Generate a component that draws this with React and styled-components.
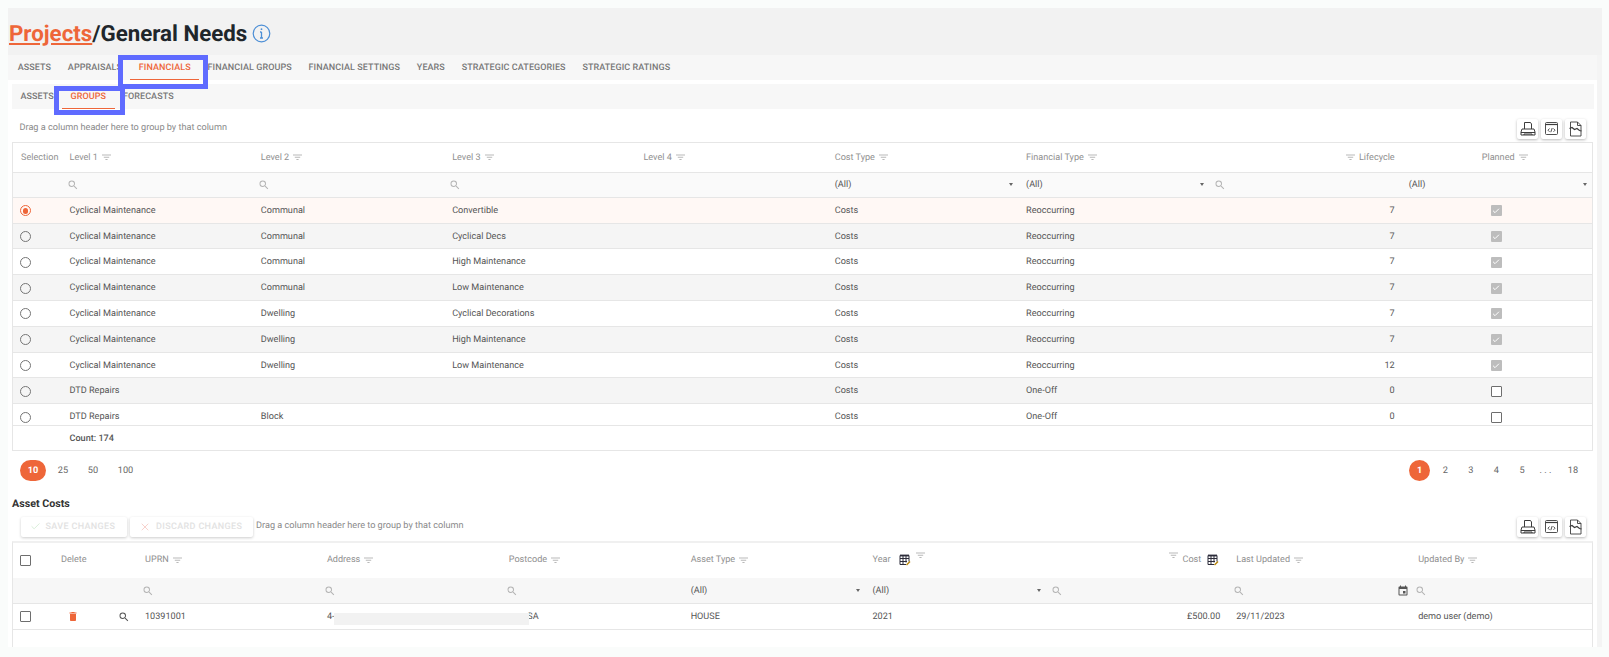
import styled, { createGlobalStyle } from "styled-components"
import { Check, X } from "lucide-react"
import { MdDelete, MdEvent, MdSearch } from "react-icons/md"

const orange = "#ee6639"

const GlobalStyle = createGlobalStyle`
    html, body {
        margin: 0;
        height: 100%;
        background: #fafcfb;
        overflow: hidden;
    }
    body {
        font-family: Roboto, "Liberation Sans", sans-serif;
        font-size: 9.1px;
        color: #555;
        text-rendering: geometricPrecision;
    }
`

const Frame = styled.div`
    position: relative;
    margin: 8px 7px 0 7.5px;
    height: 638.7px;
    overflow: hidden;
    background: #fff;
`

const TitleBand = styled.div`
    height: 47px;
    background: #f2f2f2;
    display: flex;
    align-items: center;
    gap: 5px;
    padding: 4px 0 0 1.5px;
    box-sizing: border-box;
`

const Title = styled.h1`
    margin: 0;
    font-size: 22.3px;
    font-weight: 700;
    color: #20262b;
`

const TitleLink = styled.a`
    color: ${orange};
    text-decoration: underline;
    text-underline-offset: 2px;
`

const Body = styled.div`
    display: flex;
    height: 591.7px;
`

const Main = styled.div`
    flex: 1;
    min-width: 0;
`

const Scrollbar = styled.div`
    width: 5px;
    background: #f4f4f4;
`

const TabBar = styled.div`
    display: flex;
    height: ${p => p.$h}px;
    background: #f7f7f7;
    padding-left: ${p => p.$pad}px;
    margin: ${p => p.$margin};
    box-sizing: border-box;
`

const Tab = styled.div`
    display: flex;
    align-items: center;
    padding: 1px 8.4px 0;
    font-size: 9px;
    font-weight: 500;
    letter-spacing: 0.08px;
    text-transform: uppercase;
    color: ${p => (p.$active ? orange : "#777")};
    box-shadow: ${p => (p.$active ? `inset 0 -1px 0 ${orange}` : "none")};
    white-space: nowrap;
`

const Section = styled.div`
    margin: 0 4px 0 4.5px;
`

const Toolbar = styled.div`
    display: flex;
    align-items: center;
    height: ${p => p.$h}px;
    padding: ${p => p.$pad};
    box-sizing: border-box;
`

const DragHint = styled.div`
    flex: 1;
    color: #8a8a8a;
    font-size: 9.15px;
    padding: 0 0 ${p => p.$raise}px ${p => p.$pad}px;
`

const ExportGroup = styled.div`
    display: flex;
    gap: 3px;
    margin-right: 7px;
`

const ExportButton = styled.div`
    width: 21px;
    height: 20.5px;
    display: flex;
    align-items: center;
    justify-content: center;
    background: #fff;
    border-radius: 2px;
    box-shadow: 0 1px 3px rgba(0, 0, 0, 0.28);
    color: #3c3c3c;
`

const EditButton = styled.div`
    display: flex;
    align-items: center;
    gap: 5px;
    height: 19.5px;
    width: ${p => p.$w}px;
    margin-right: ${p => p.$mr}px;
    padding-left: 9px;
    box-sizing: border-box;
    background: #fff;
    border-radius: 2px;
    box-shadow: 0 1px 3px rgba(0, 0, 0, 0.2);
    color: #e2e2e2;
    font-size: 9px;
    font-weight: 500;
    letter-spacing: 0.35px;
    white-space: nowrap;
`

const Grid = styled.div`
    border-left: 1px solid #e6e6e6;
    border-right: 1px solid #e6e6e6;
    border-top: ${p => (p.$thick ? "2px solid #f0f0f0" : "1px solid #e6e6e6")};
    border-bottom: ${p => (p.$open ? "none" : "1px solid #e6e6e6")};
    height: ${p => p.$h}px;
    box-sizing: border-box;
    overflow: hidden;
`

const Row = styled.div`
    position: relative;
    display: grid;
    grid-template-columns: ${p => p.$cols};
    grid-template-rows: ${p => (p.$inner ? `${p.$inner}px` : "100%")};
    height: ${p => p.$h}px;
    box-sizing: border-box;
    overflow: hidden;
    background: ${p => p.$bg || "#fff"};
    border-bottom: ${p => (p.$plain ? "none" : "1px solid #e6e6e6")};
`

const Cell = styled.div`
    display: flex;
    align-items: center;
    justify-content: ${p => p.$justify || "flex-start"};
    gap: ${p => p.$gap ?? 4}px;
    padding: 0 ${p => p.$pr ?? 8}px 0 ${p => p.$pl ?? 8}px;
    min-width: 0;
    white-space: nowrap;
    color: ${p => (p.$head ? "#909090" : "#555")};
    font-weight: ${p => (p.$bold ? 500 : 400)};
`

const HeadFilter = styled.svg`
    width: 9px;
    height: 6.5px;
    flex: none;
    color: #a8a8a8;
    transform: translate(${p => p.$shift || 0}px, ${p => p.$raise || 0}px);
`

const Search = styled(MdSearch)`
    width: 12px;
    height: 12px;
    color: ${p => (p.$dark ? "#555" : "#b4b4b4")};
    flex: none;
    margin-left: -3px;
`

const Caret = styled.span`
    margin-left: auto;
    margin-right: -3px;
    width: 0;
    height: 0;
    border-left: 2.5px solid transparent;
    border-right: 2.5px solid transparent;
    border-top: 3px solid #666;
`

const Radio = styled.span`
    width: 11px;
    height: 11px;
    box-sizing: border-box;
    border-radius: 50%;
    border: 1.5px solid ${p => (p.$on ? orange : "#757575")};
    display: flex;
    align-items: center;
    justify-content: center;
    &::after {
        content: "";
        width: 5.5px;
        height: 5.5px;
        border-radius: 50%;
        background: ${p => (p.$on ? orange : "transparent")};
    }
`

const Box = styled.span`
    width: 11px;
    height: 11px;
    box-sizing: border-box;
    display: flex;
    align-items: center;
    justify-content: center;
    border-radius: 1px;
    color: #fff;
    background: ${p => (p.$on ? "#bdbdbd" : "#fff")};
    border: ${p => (p.$on ? "none" : "1.5px solid #6e6e6e")};
`

const Pager = styled.div`
    display: flex;
    justify-content: space-between;
    align-items: center;
    height: 40px;
    padding: 0 5.5px 1px 8px;
    box-sizing: border-box;
`

const PageGroup = styled.div`
    display: flex;
    align-items: center;
`

const PageNum = styled.div`
    min-width: ${p => p.$w}px;
    height: 21px;
    box-sizing: border-box;
    display: flex;
    align-items: center;
    justify-content: center;
    border-radius: 11px;
    margin-right: ${p => p.$mr ?? 0}px;
    font-size: 9.2px;
    font-weight: ${p => (p.$on ? 700 : 400)};
    background: ${p => (p.$on ? orange : "transparent")};
    color: ${p => (p.$on ? "#fff" : "#666")};
`

const SectionTitle = styled.div`
    height: 25px;
    display: flex;
    align-items: center;
    font-size: 10.7px;
    font-weight: 700;
    color: #333;
`

const Redaction = styled.div`
    position: absolute;
    left: 321px;
    top: 8.5px;
    width: 195px;
    height: 12px;
    background: #f2f2f2;
`

const Marker = styled.div`
    position: absolute;
    left: ${p => p.$x}px;
    top: ${p => p.$y}px;
    width: ${p => p.$w}px;
    height: ${p => p.$h}px;
    box-sizing: border-box;
    border: 5.5px solid #5f6bff;
`

const InfoIcon = () => (
    <svg width="19" height="19" viewBox="0 0 19 19" fill="none" stroke="#4d8fd6">
        <circle cx="9.5" cy="9.5" r="8.3" strokeWidth="1.2" />
        <path d="M9.5 8v6M8 8h1.5M8 14h3" strokeWidth="1.3" />
        <circle cx="9.5" cy="5.2" r="0.9" fill="#4d8fd6" stroke="none" />
    </svg>
)

const FilterIcon = ({ raise, shift }) => (
    <HeadFilter $raise={raise} $shift={shift} viewBox="0 0 10 7" fill="none" stroke="currentColor" strokeWidth="0.9">
        <path d="M0 1h10M2 3.5h6M3.8 6h2.4" />
    </HeadFilter>
)

const PrintIcon = () => (
    <svg width="16" height="16" viewBox="0 0 16 16" fill="none" stroke="currentColor" strokeWidth="1">
        <path d="M4.5 8V1.5h6L11.5 3v5" />
        <path d="M2 8h12l1 3v3H1v-3z" />
        <path d="M1 11.5h14M4 14v-1h8v1" />
    </svg>
)

const CodeIcon = () => (
    <svg width="15" height="15" viewBox="0 0 15 15" fill="none" stroke="currentColor" strokeWidth="0.9">
        <rect x="1.5" y="1.5" width="12" height="12" rx="1" />
        <path d="M1.5 3.5h12" strokeWidth="1.2" />
        <path d="M5.5 7.5 4 9.2l1.5 1.6M9.5 7.5 11 9.2l-1.5 1.6M8.2 7 6.8 11.2" />
    </svg>
)

const CsvIcon = () => (
    <svg width="15" height="16" viewBox="0 0 15 16" fill="none" stroke="currentColor" strokeWidth="0.9">
        <path d="M2.5 1h7l3.5 3.5V15h-10.5z" />
        <path d="M9.5 1v3.5H13" />
        <path d="M1.5 7.5 4 6.5l2.5 2 2.5-1 2.5 2 2 0.5" strokeWidth="1.2" />
    </svg>
)

const EditGridIcon = () => (
    <svg width="12" height="12" viewBox="0 0 12 12" fill="none" stroke="#2c2c3a" strokeWidth="1">
        <path d="M1 1.5h9v6M1 1.5v9h6M1 4.5h9M1 7.5h7M4 1.5v9M7 1.5v7" />
        <path d="M1 1.5h9" strokeWidth="1.8" />
        <path d="M7.5 11 11 7.5" stroke="#b8860b" strokeWidth="1.5" />
    </svg>
)

const SavedCheck = styled(Check)`
    width: 11px;
    height: 11px;
    color: #d5ecd5;
`

const DiscardX = styled(X)`
    width: 12px;
    height: 12px;
    color: #f8d2cd;
`

const Trash = styled(MdDelete)`
    width: 12px;
    height: 13px;
    color: ${orange};
    margin-left: 6px;
`

const Calendar = styled(MdEvent)`
    width: 12px;
    height: 12px;
    color: #555;
    margin-left: auto;
    margin-right: -7px;
`

const Tick = styled(Check)`
    width: 8px;
    height: 8px;
    stroke-width: 3;
`

const topCols = "48.5px repeat(8, 1fr)"
const bottomCols = "40px 84px repeat(8, 1fr)"

const groups = [
    ["Cyclical Maintenance", "Communal", "Convertible", "Costs", "Reoccurring", 7, true],
    ["Cyclical Maintenance", "Communal", "Cyclical Decs", "Costs", "Reoccurring", 7, true],
    ["Cyclical Maintenance", "Communal", "High Maintenance", "Costs", "Reoccurring", 7, true],
    ["Cyclical Maintenance", "Communal", "Low Maintenance", "Costs", "Reoccurring", 7, true],
    ["Cyclical Maintenance", "Dwelling", "Cyclical Decorations", "Costs", "Reoccurring", 7, true],
    ["Cyclical Maintenance", "Dwelling", "High Maintenance", "Costs", "Reoccurring", 7, true],
    ["Cyclical Maintenance", "Dwelling", "Low Maintenance", "Costs", "Reoccurring", 12, true],
    ["DTD Repairs", "", "", "Costs", "One-Off", 0, false],
    ["DTD Repairs", "Block", "", "Costs", "One-Off", 0, false],
]

function rowBg(i) {
    if (i === 0) return "#fff8f5"
    return i % 2 === 1 ? "#f5f5f5" : "#fff"
}

const exportButtons = (
    <ExportGroup>
        <ExportButton><PrintIcon /></ExportButton>
        <ExportButton><CodeIcon /></ExportButton>
        <ExportButton><CsvIcon /></ExportButton>
    </ExportGroup>
)

export default function App() {
    return (
        <>
            <GlobalStyle />
            <Frame>
                <TitleBand>
                    <Title><TitleLink>Projects</TitleLink>/General Needs</Title>
                    <InfoIcon />
                </TitleBand>
                <Body>
                    <Main>
                        <TabBar $h={25} $pad={1.8}>
                            <Tab>Assets</Tab>
                            <Tab>Appraisals</Tab>
                            <Tab $active>Financials</Tab>
                            <Tab>Financial Groups</Tab>
                            <Tab>Financial Settings</Tab>
                            <Tab>Years</Tab>
                            <Tab>Strategic Categories</Tab>
                            <Tab>Strategic Ratings</Tab>
                        </TabBar>
                        <TabBar $h={24.7} $margin="4px 3px 0 4.5px">
                            <Tab>Assets</Tab>
                            <Tab $active>Groups</Tab>
                            <Tab>Forecasts</Tab>
                        </TabBar>
                        <Section>
                            <Toolbar $h={33.6} $pad="7px 0 0 0">
                                <DragHint $pad={7.5} $raise={2}>Drag a column header here to group by that column</DragHint>
                                {exportButtons}
                            </Toolbar>
                            <Grid $h={308.7}>
                                <Row $cols={topCols} $h={29.5}>
                                    <Cell $head>Selection</Cell>
                                    <Cell $head>Level 1 <FilterIcon /></Cell>
                                    <Cell $head>Level 2 <FilterIcon /></Cell>
                                    <Cell $head>Level 3 <FilterIcon /></Cell>
                                    <Cell $head>Level 4 <FilterIcon /></Cell>
                                    <Cell $head>Cost Type <FilterIcon /></Cell>
                                    <Cell $head>Financial Type <FilterIcon /></Cell>
                                    <Cell $head $justify="flex-end" $pr={6}><FilterIcon /> Lifecycle</Cell>
                                    <Cell $head $pl={81}>Planned <FilterIcon /></Cell>
                                </Row>
                                <Row $cols={topCols} $h={25} $bg="#fafafa">
                                    <Cell />
                                    <Cell><Search /></Cell>
                                    <Cell><Search /></Cell>
                                    <Cell><Search /></Cell>
                                    <Cell />
                                    <Cell>(All)<Caret /></Cell>
                                    <Cell>(All)<Caret /></Cell>
                                    <Cell><Search /></Cell>
                                    <Cell>(All)<Caret /></Cell>
                                </Row>
                                {groups.map((g, i) => (
                                    <Row key={i} $cols={topCols} $h={i === 8 ? 22.1 : 25.8} $inner={26} $bg={rowBg(i)}>
                                        <Cell $pl={7}><Radio $on={i === 0} /></Cell>
                                        <Cell>{g[0]}</Cell>
                                        <Cell>{g[1]}</Cell>
                                        <Cell>{g[2]}</Cell>
                                        <Cell />
                                        <Cell>{g[3]}</Cell>
                                        <Cell>{g[4]}</Cell>
                                        <Cell $justify="flex-end" $pr={6}>{g[5]}</Cell>
                                        <Cell $justify="center"><Box $on={g[6]}>{g[6] && <Tick />}</Box></Cell>
                                    </Row>
                                ))}
                                <Row $cols={topCols} $h={24.5} $plain>
                                    <Cell />
                                    <Cell $bold>Count: 174</Cell>
                                </Row>
                            </Grid>
                            <Pager>
                                <PageGroup>
                                    <PageNum $on $w={26} $mr={4}>10</PageNum>
                                    <PageNum $w={26} $mr={4}>25</PageNum>
                                    <PageNum $w={26} $mr={4}>50</PageNum>
                                    <PageNum $w={31}>100</PageNum>
                                </PageGroup>
                                <PageGroup>
                                    <PageNum $on $w={21} $mr={4.6}>1</PageNum>
                                    <PageNum $w={21} $mr={4.6}>2</PageNum>
                                    <PageNum $w={21} $mr={4.6}>3</PageNum>
                                    <PageNum $w={21} $mr={4.6}>4</PageNum>
                                    <PageNum $w={21}>5</PageNum>
                                    <PageNum $w={26}>. . .</PageNum>
                                    <PageNum $w={29}>18</PageNum>
                                </PageGroup>
                            </Pager>
                            <SectionTitle>Asset Costs</SectionTitle>
                            <Toolbar $h={25} $pad="0 0 3.3px 8.5px">
                                <EditButton $w={106} $mr={3.6}><SavedCheck />SAVE CHANGES</EditButton>
                                <EditButton $w={123} $mr={3}><DiscardX />DISCARD CHANGES</EditButton>
                                <DragHint $pad={0} $raise={2.5}>Drag a column header here to group by that column</DragHint>
                                {exportButtons}
                            </Toolbar>
                            <Grid $thick $open $h={106}>
                                <Row $cols={bottomCols} $h={35} $plain>
                                    <Cell $pl={6.5}><Box /></Cell>
                                    <Cell $head>Delete</Cell>
                                    <Cell $head>UPRN <FilterIcon /></Cell>
                                    <Cell $head>Address <FilterIcon /></Cell>
                                    <Cell $head>Postcode <FilterIcon /></Cell>
                                    <Cell $head>Asset Type <FilterIcon /></Cell>
                                    <Cell $head $gap={8}>Year <EditGridIcon /><FilterIcon raise={-5} shift={-3} /></Cell>
                                    <Cell $head $gap={6} $pr={9} $justify="flex-end"><FilterIcon raise={-5} shift={2} />Cost <EditGridIcon /></Cell>
                                    <Cell $head>Last Updated <FilterIcon /></Cell>
                                    <Cell $head>Updated By <FilterIcon /></Cell>
                                </Row>
                                <Row $cols={bottomCols} $h={26.3} $bg="#f7f7f7">
                                    <Cell />
                                    <Cell />
                                    <Cell><Search /></Cell>
                                    <Cell><Search /></Cell>
                                    <Cell><Search /></Cell>
                                    <Cell>(All)<Caret /></Cell>
                                    <Cell>(All)<Caret /></Cell>
                                    <Cell><Search /></Cell>
                                    <Cell><Search /><Calendar /></Cell>
                                    <Cell><Search /></Cell>
                                </Row>
                                <Row $cols={bottomCols} $h={26}>
                                    <Cell $pl={6.5}><Box /></Cell>
                                    <Cell $justify="space-between" $gap={0} $pr={7}><Trash /><Search $dark /></Cell>
                                    <Cell>10391001</Cell>
                                    <Cell>4-</Cell>
                                    <Cell $justify="flex-end" $pr={144}>SA</Cell>
                                    <Cell>HOUSE</Cell>
                                    <Cell>2021</Cell>
                                    <Cell $justify="flex-end">£500.00</Cell>
                                    <Cell>29/11/2023</Cell>
                                    <Cell>demo user (demo)</Cell>
                                    <Redaction />
                                </Row>
                            </Grid>
                        </Section>
                    </Main>
                    <Scrollbar />
                </Body>
                <Marker $x={110.5} $y={47} $w={89.6} $h={33.7} />
                <Marker $x={46.5} $y={78} $w={70.7} $h={28.7} />
            </Frame>
        </>
    )
}
